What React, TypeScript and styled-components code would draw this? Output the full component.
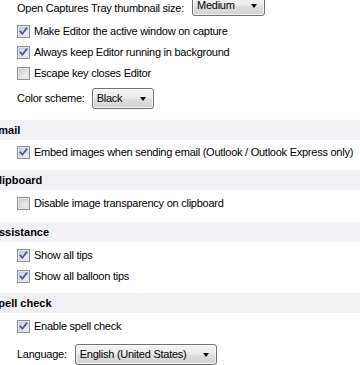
import React from "react";
import styled, { createGlobalStyle } from "styled-components";

const GlobalStyle = createGlobalStyle`
  html, body { margin: 0; padding: 0; background: #ffffff; }
  body {
    font-family: "Liberation Sans", Arial, sans-serif;
    font-size: 11px;
    letter-spacing: -0.25px;
    color: #000000;
    overflow: hidden;
  }
`;

const Page = styled.div`
  width: 360px;
  height: 365px;
  overflow: hidden;
  background: #ffffff;
`;

const Section = styled.section`
  display: flex;
  flex-direction: column;
`;

const Header = styled.div`
  height: 20px;
  background: #f0f0f5;
  display: flex;
  align-items: center;
  overflow: hidden;
`;

const HeaderTitle = styled.span`
  font-weight: bold;
  font-size: 11px;
  letter-spacing: 0;
  margin-left: -9px;
  white-space: nowrap;
`;

const Body = styled.div<{ $pt: number; $pb: number }>`
  display: flex;
  flex-direction: column;
  padding: ${(p) => p.$pt}px 0 ${(p) => p.$pb}px 17px;
`;

const Row = styled.label<{ $mt?: number }>`
  display: flex;
  align-items: center;
  height: 21px;
  line-height: 21px;
  margin-top: ${(p) => p.$mt ?? 0}px;
  white-space: nowrap;
`;

const FieldRow = styled.div<{ $mt?: number; $top?: boolean }>`
  display: flex;
  align-items: ${(p) => (p.$top ? "flex-start" : "center")};
  height: 21px;
  margin-top: ${(p) => p.$mt ?? 0}px;
  white-space: nowrap;
`;

const FieldLabel = styled.span<{ $gap: number; $shift?: number }>`
  line-height: 21px;
  margin-right: ${(p) => p.$gap}px;
  padding-top: ${(p) => p.$shift ?? 0}px;
`;

const CheckText = styled.span`
  margin-left: 4px;
`;

const Select = styled.div<{ $w: number }>`
  position: relative;
  box-sizing: border-box;
  width: ${(p) => p.$w}px;
  height: 21px;
  border: 1px solid #707070;
  border-radius: 3px;
  background: linear-gradient(#f3f3f3 0%, #ececec 45%, #dedede 55%, #d2d2d2 100%);
  box-shadow: inset 0 0 0 1px rgba(255, 255, 255, 0.7);
  padding-left: 4px;
  line-height: 19px;
  font-size: 11px;
`;

const Arrow = styled.span`
  position: absolute;
  right: 7px;
  top: 8px;
  width: 0;
  height: 0;
  border-left: 3.5px solid transparent;
  border-right: 3.5px solid transparent;
  border-top: 4px solid #000000;
`;

const Box = styled.svg`
  flex: none;
  width: 13px;
  height: 13px;
`;

function CheckBox({ checked }: { checked: boolean }) {
  return (
    <Box viewBox="0 0 13 13">
      <defs>
        <linearGradient id={checked ? "gc" : "gu"} x1="0" y1="0" x2="1" y2="1">
          <stop offset="0" stopColor="#c9ccd2" />
          <stop offset="1" stopColor="#f7f7f7" />
        </linearGradient>
      </defs>
      <rect x="0.5" y="0.5" width="12" height="12" fill="#f4f4f4" stroke="#8e8f8f" />
      <rect x="2" y="2" width="9" height="9" fill={`url(#${checked ? "gc" : "gu"})`} stroke="#b7b9bd" strokeWidth="0.5" />
      {checked && (
        <path d="M3.3 6.4 L5.4 8.7 L9.6 3.3" fill="none" stroke="#43589a" strokeWidth="1.7" strokeLinecap="square" />
      )}
    </Box>
  );
}

function Check({ checked, children, mt }: { checked: boolean; children: React.ReactNode; mt?: number }) {
  return (
    <Row $mt={mt}>
      <CheckBox checked={checked} />
      <CheckText>{children}</CheckText>
    </Row>
  );
}

function Dropdown({ width, value }: { width: number; value: string }) {
  return (
    <Select $w={width}>
      {value}
      <Arrow />
    </Select>
  );
}

export default function App() {
  return (
    <Page>
      <GlobalStyle />
      <Section>
        <Body $pt={0} $pb={11}>
          <FieldRow $mt={-5} $top>
            <FieldLabel $gap={8} $shift={3}>Open Captures Tray thumbnail size:</FieldLabel>
            <Dropdown width={73} value="Medium" />
          </FieldRow>
          <Check checked mt={5}>Make Editor the active window on capture</Check>
          <Check checked>Always keep Editor running in background</Check>
          <Check checked={false}>Escape key closes Editor</Check>
          <FieldRow $mt={4}>
            <FieldLabel $gap={7}>Color scheme:</FieldLabel>
            <Dropdown width={62} value="Black" />
          </FieldRow>
        </Body>
      </Section>
      <Section>
        <Header>
          <HeaderTitle>Email</HeaderTitle>
        </Header>
        <Body $pt={2} $pb={7}>
          <Check checked>Embed images when sending email (Outlook / Outlook Express only)</Check>
        </Body>
      </Section>
      <Section>
        <Header>
          <HeaderTitle>Clipboard</HeaderTitle>
        </Header>
        <Body $pt={3} $pb={8}>
          <Check checked={false}>Disable image transparency on clipboard</Check>
        </Body>
      </Section>
      <Section>
        <Header>
          <HeaderTitle>Assistance</HeaderTitle>
        </Header>
        <Body $pt={3} $pb={6}>
          <Check checked>Show all tips</Check>
          <Check checked>Show all balloon tips</Check>
        </Body>
      </Section>
      <Section>
        <Header>
          <HeaderTitle>Spell check</HeaderTitle>
        </Header>
        <Body $pt={3} $pb={0}>
          <Check checked>Enable spell check</Check>
          <FieldRow $mt={7}>
            <FieldLabel $gap={8}>Language:</FieldLabel>
            <Dropdown width={142} value="English (United States)" />
          </FieldRow>
        </Body>
      </Section>
    </Page>
  );
}
